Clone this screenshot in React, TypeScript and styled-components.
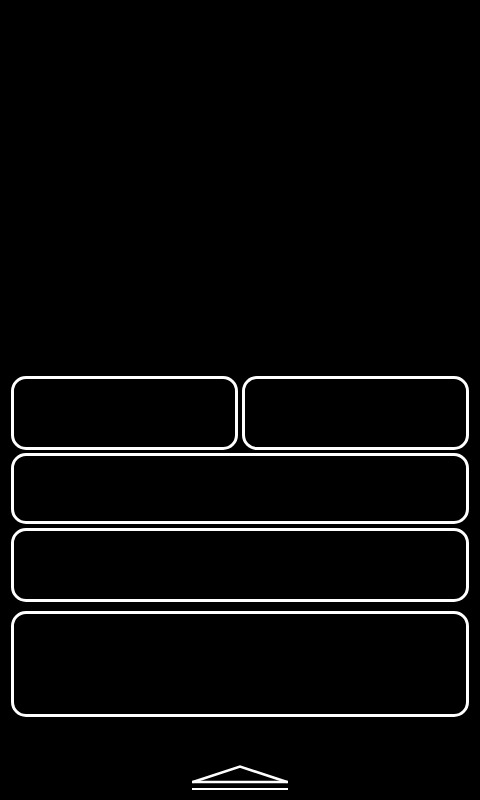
import React from 'react';
import styled, { createGlobalStyle } from 'styled-components';

const GlobalStyle = createGlobalStyle`
  html, body {
    margin: 0;
    padding: 0;
    background: #000;
    font-family: "Liberation Sans", Arial, sans-serif;
  }
  #root {
    height: 800px;
  }
`

const Screen = styled.div`
  width: 480px;
  height: 800px;
  background: #000;
  display: flex;
  flex-direction: column;
  overflow: hidden;
`

const Preview = styled.div`
  flex: 1;
`

const Panel = styled.div`
  padding: 0 11px;
  display: flex;
  flex-direction: column;
`

const Row = styled.div<{ $gap?: number }>`
  display: grid;
  grid-template-columns: 1fr 1fr;
  column-gap: 4px;
  margin-top: ${p => p.$gap || 0}px;
`

const Slot = styled.button<{ $height: number; $gap?: number }>`
  box-sizing: border-box;
  height: ${p => p.$height}px;
  margin-top: ${p => p.$gap || 0}px;
  border: 3px solid #fff;
  border-radius: 15px;
  background: transparent;
  padding: 0;
  cursor: pointer;
`

const Footer = styled.div`
  height: 83px;
  display: flex;
  justify-content: center;
  padding-top: 48px;
  box-sizing: border-box;
`

const ToggleIcon = () => (
  <svg width="98" height="28" viewBox="0 0 98 28" fill="none" stroke="#fff" strokeWidth="2.6">
    <polyline points="2,17 49,1.5 96,17" strokeLinejoin="miter" />
    <line x1="1" y1="17" x2="97" y2="17" />
    <line x1="1" y1="24" x2="97" y2="24" strokeWidth="2.2" />
  </svg>
)

const App: React.FC = () => {
  return (
    <Screen>
      <GlobalStyle />
      <Preview />
      <Panel>
        <Row>
          <Slot $height={74} />
          <Slot $height={74} />
        </Row>
        <Slot $height={71} $gap={3} />
        <Slot $height={74} $gap={4} />
        <Slot $height={106} $gap={9} />
      </Panel>
      <Footer>
        <ToggleIcon />
      </Footer>
    </Screen>
  );
}
export default App;
